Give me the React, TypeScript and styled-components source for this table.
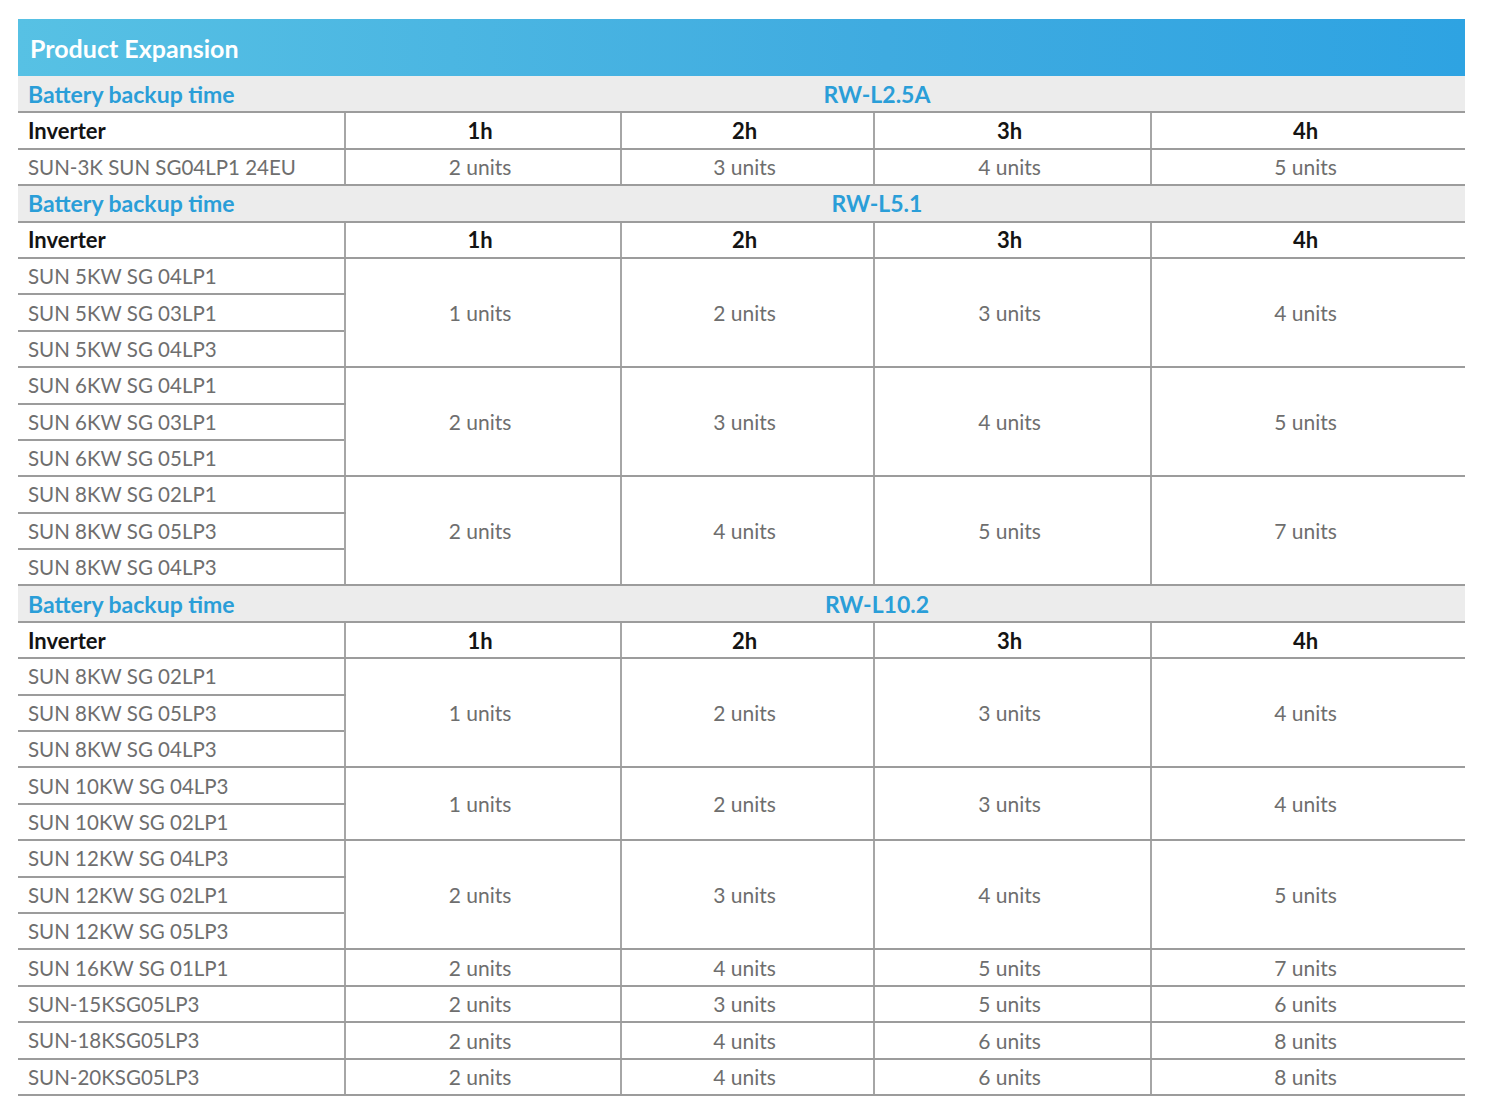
import React from 'react';
import styled, { createGlobalStyle } from 'styled-components';

const GlobalStyle = createGlobalStyle`
  body {
    margin: 0;
    background: #fff;
    font-family: Lato, "Open Sans", sans-serif;
  }
`;

const Page = styled.div`
  padding: 19px 21px 0 18px;
`;

const Banner = styled.div`
  height: 57px;
  display: flex;
  align-items: center;
  padding-left: 12px;
  background: linear-gradient(90deg, #57c1e4 0%, #3fabe0 60%, #2ea3e2 100%);
  color: #fff;
  font-size: 25px;
  font-weight: 700;
`;

const Table = styled.table`
  width: 100%;
  border-collapse: collapse;
  table-layout: fixed;
`;

const Row = styled.tr`
  height: 36.4px;
`;

const SectionRow = styled.tr`
  height: 36.4px;
  background: #ececec;
`;

const SectionCell = styled.td<{ $center?: boolean }>`
  padding: ${(p) => (p.$center ? '0 28px 0 10px' : '0 10px')};
  color: #2a9ed8;
  font-size: 23px;
  font-weight: 700;
  white-space: nowrap;
  text-align: ${(p) => (p.$center ? 'center' : 'left')};
  border-bottom: 2px solid #9c9c9c;
`;

const HeadCell = styled.th<{ $first?: boolean }>`
  padding: ${(p) => (p.$first ? '0 10px' : '0 16px 0 10px')};
  font-size: 22px;
  font-weight: 700;
  color: #141414;
  text-align: ${(p) => (p.$first ? 'left' : 'center')};
  border-bottom: 2px solid #9c9c9c;
  border-left: ${(p) => (p.$first ? 'none' : '2px solid #a6a6a6')};
`;

const NameCell = styled.td`
  padding: 0 10px;
  font-size: 20.5px;
  color: #6e6e6e;
  white-space: nowrap;
  border-bottom: 2px solid #9c9c9c;
`;

const UnitCell = styled.td`
  padding: 0 16px 0 10px;
  font-size: 21px;
  color: #6e6e6e;
  text-align: center;
  border-bottom: 2px solid #9c9c9c;
  border-left: 2px solid #a6a6a6;
`;

type Group = { names: string[]; units: number[] };
type Section = { model: string; groups: Group[] };

const sections: Section[] = [
  {
    model: 'RW-L2.5A',
    groups: [{ names: ['SUN-3K SUN SG04LP1 24EU'], units: [2, 3, 4, 5] }],
  },
  {
    model: 'RW-L5.1',
    groups: [
      { names: ['SUN 5KW SG 04LP1', 'SUN 5KW SG 03LP1', 'SUN 5KW SG 04LP3'], units: [1, 2, 3, 4] },
      { names: ['SUN 6KW SG 04LP1', 'SUN 6KW SG 03LP1', 'SUN 6KW SG 05LP1'], units: [2, 3, 4, 5] },
      { names: ['SUN 8KW SG 02LP1', 'SUN 8KW SG 05LP3', 'SUN 8KW SG 04LP3'], units: [2, 4, 5, 7] },
    ],
  },
  {
    model: 'RW-L10.2',
    groups: [
      { names: ['SUN 8KW SG 02LP1', 'SUN 8KW SG 05LP3', 'SUN 8KW SG 04LP3'], units: [1, 2, 3, 4] },
      { names: ['SUN 10KW SG 04LP3', 'SUN 10KW SG 02LP1'], units: [1, 2, 3, 4] },
      { names: ['SUN 12KW SG 04LP3', 'SUN 12KW SG 02LP1', 'SUN 12KW SG 05LP3'], units: [2, 3, 4, 5] },
      { names: ['SUN 16KW SG 01LP1'], units: [2, 4, 5, 7] },
      { names: ['SUN-15KSG05LP3'], units: [2, 3, 5, 6] },
      { names: ['SUN-18KSG05LP3'], units: [2, 4, 6, 8] },
      { names: ['SUN-20KSG05LP3'], units: [2, 4, 6, 8] },
    ],
  },
];

const hours = ['1h', '2h', '3h', '4h'];

export default function App() {
  return (
    <Page>
      <GlobalStyle />
      <Banner>Product Expansion</Banner>
      <Table>
        <colgroup>
          <col style={{ width: 327 }} />
          <col style={{ width: 276 }} />
          <col style={{ width: 253 }} />
          <col style={{ width: 277 }} />
          <col style={{ width: 314 }} />
        </colgroup>
        {sections.map((s) => (
          <tbody key={s.model}>
            <SectionRow>
              <SectionCell>Battery backup time</SectionCell>
              <SectionCell />
              <SectionCell colSpan={2} $center>
                {s.model}
              </SectionCell>
              <SectionCell />
            </SectionRow>
            <Row>
              <HeadCell $first>Inverter</HeadCell>
              {hours.map((h) => (
                <HeadCell key={h}>{h}</HeadCell>
              ))}
            </Row>
            {s.groups.map((g, gi) =>
              g.names.map((n, ni) => (
                <Row key={`${gi}-${ni}`}>
                  <NameCell>{n}</NameCell>
                  {ni === 0 &&
                    g.units.map((u, ui) => (
                      <UnitCell key={ui} rowSpan={g.names.length}>
                        {u} units
                      </UnitCell>
                    ))}
                </Row>
              ))
            )}
          </tbody>
        ))}
      </Table>
    </Page>
  );
}
